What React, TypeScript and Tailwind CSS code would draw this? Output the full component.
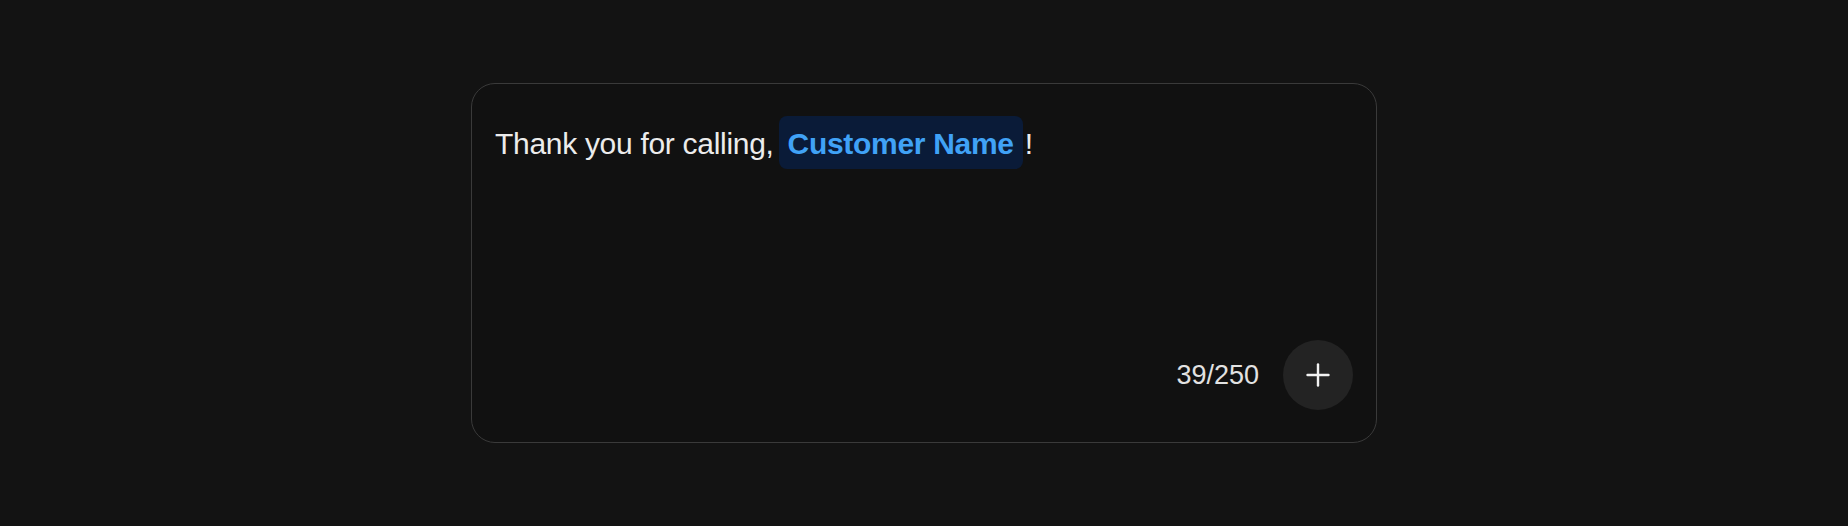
import { Plus } from "lucide-react";

export default function App() {
  return (
    <div
      className="flex h-[526px] w-full items-center justify-center bg-[#131313]"
      style={{ fontFamily: '"Liberation Sans", Arial, sans-serif' }}
    >
      <div className="flex h-[360px] w-[906px] flex-col rounded-[24px] border border-[#3a3a3a] bg-[#111111] px-[23px] py-8">
        {/* message with inline variable chip */}
        <div className="flex items-baseline text-[30px] tracking-[-0.01em] text-[#ececec]">
          <span>Thank you for calling,</span>
          <span className="ml-[5px] inline-block rounded-lg bg-[#0a1b38] px-[9px] pt-[13px] pb-[10px] leading-[30px] font-bold text-[#40a2f6]">
            Customer Name
          </span>
          <span className="ml-[2px]">!</span>
        </div>

        <div className="mt-auto flex items-center justify-end gap-6">
          <span className="text-[27px] text-[#e2e2e2]">39/250</span>
          <button className="flex h-[70px] w-[70px] items-center justify-center rounded-full bg-[#232323] text-[#f2f2f2]">
            <Plus size={36} strokeWidth={2.4} absoluteStrokeWidth />
          </button>
        </div>
      </div>
    </div>
  );
}
